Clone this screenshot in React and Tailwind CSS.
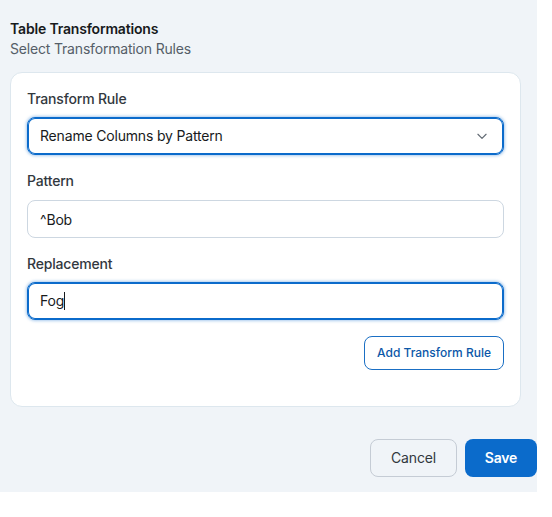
import React, { useState } from "react";

const font = { fontFamily: "Inter, 'Noto Sans', sans-serif" };

function Chevron() {
  return (
    <svg width="14" height="14" viewBox="0 0 24 24" fill="none" stroke="#636b74" strokeWidth="2" strokeLinecap="round" strokeLinejoin="round">
      <path d="M5 9l7 7 7-7" />
    </svg>
  );
}

const App = () => {
  const [pattern, setPattern] = useState("^Bob");
  const [replacement] = useState("Fog");

  return (
    <div className="w-[552px] h-[517px] bg-white tracking-[-0.18px]" style={font}>
      <div className="w-[537px] bg-[#f0f4f8] pl-[10px] pt-[19px] pb-[15px] flex flex-col">
        {/* Header */}
        <h2 className="text-sm leading-5 font-semibold text-[#171a1c]">Table Transformations</h2>
        <p className="text-sm leading-5 text-[#555e68]">Select Transformation Rules</p>

        {/* Card */}
        <div className="mt-[13px] w-[511px] bg-white border border-[#dde7ee] rounded-xl pl-[16px] pr-[16px] pt-[16px] pb-[36px] flex flex-col">
          <label className="text-sm leading-5 font-medium text-[#32383e] mb-2">Transform Rule</label>
          <button className="h-[38px] w-full flex items-center justify-between px-3 rounded-lg border border-[#0b6bcb] bg-white text-sm text-[#171a1c] tracking-[-0.18px] shadow-[inset_0_0_0_1px_#0b6bcb,0_0_3px_1px_rgba(11,107,203,0.35)]">
            <span>Rename Columns by Pattern</span>
            <span className="mr-[2px]"><Chevron /></span>
          </button>

          <label className="mt-4 text-sm leading-5 font-medium text-[#32383e] mb-[9px]">Pattern</label>
          <input
            value={pattern}
            onChange={(e) => setPattern(e.target.value)}
            className="h-[38px] w-full px-3 rounded-lg border border-[#cdd7e1] bg-white text-sm text-[#171a1c] tracking-[-0.18px] outline-none"
          />

          <label className="mt-4 text-sm leading-5 font-medium text-[#32383e] mb-2">Replacement</label>
          <div className="h-[38px] w-full flex items-center px-3 rounded-lg border border-[#0b6bcb] bg-white text-sm text-[#171a1c] shadow-[inset_0_0_0_1px_#0b6bcb,0_0_3px_1px_rgba(11,107,203,0.35)]">
            <span>{replacement}</span>
            <span className="w-px h-[18px] bg-[#171a1c]" />
          </div>

          <div className="mt-4 flex justify-end">
            <button className="h-[34px] px-[12px] rounded-lg border border-[#1a6fc4] bg-white text-xs font-medium text-[#0b57a8] tracking-normal">
              Add Transform Rule
            </button>
          </div>
        </div>

        {/* Footer */}
        <div className="mt-[32px] flex justify-end gap-2">
          <button className="h-[38px] w-[87px] rounded-lg border border-[#c5ccd5] bg-[#f0f4f8] text-sm text-[#32383e] tracking-[-0.18px]">
            Cancel
          </button>
          <button className="h-[38px] w-[72px] rounded-lg bg-[#0b6bcb] text-sm font-semibold text-white tracking-[-0.18px]">
            Save
          </button>
        </div>
      </div>
    </div>
  );
};

export default App;
